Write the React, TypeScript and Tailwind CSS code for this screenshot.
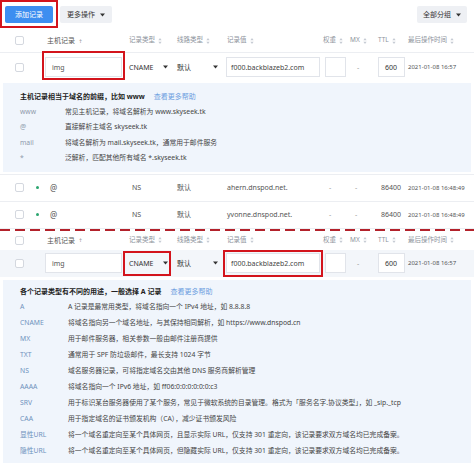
import React from 'react';

const cols = 'grid grid-cols-[42px_84px_48px_50px_98px_26px_28px_30px_1fr] items-center';

const SortIcon = () => (
    <svg width="4" height="6" viewBox="0 0 4 6" className="ml-[3px] inline-block">
        <path d="M2 0 L3.6 2.2 H0.4 Z" fill="#c5cad3" />
        <path d="M2 6 L3.6 3.8 H0.4 Z" fill="#c5cad3" />
    </svg>
);

const Caret = () => (
    <svg width="5" height="4" viewBox="0 0 5 4">
        <path d="M0 0.5 H5 L2.5 3.5 Z" fill="#333" />
    </svg>
);

const Checkbox = () => (
    <div className="ml-[15px] w-[9px] h-[9px] rounded-[2px] border border-[#d4d8df] bg-white" />
);

const RedBox: React.FC<{ className: string }> = ({ className }) => (
    <div className={`absolute border-2 border-[#d3141c] pointer-events-none ${className}`} />
);

const HeaderRow: React.FC<{ className?: string }> = ({ className = '' }) => (
    <div className={`${cols} text-[6.5px] text-[#8d939c] ${className}`}>
        <div><Checkbox /></div>
        <div className="pl-[5px] text-[7px] text-[#555] flex items-center">主机记录<span className="ml-[4px] text-[6px] text-[#999]">†</span></div>
        <div className="pl-[3px] flex items-center">记录类型<SortIcon /></div>
        <div className="pl-[3px] flex items-center">线路类型<SortIcon /></div>
        <div className="pl-[3px] flex items-center">记录值<SortIcon /></div>
        <div className="pl-[1px] flex items-center">权重<SortIcon /></div>
        <div className="pl-[2px] flex items-center">MX<SortIcon /></div>
        <div className="pl-[2px] flex items-center">TTL<SortIcon /></div>
        <div className="pl-[2px] flex items-center">最后操作时间<SortIcon /></div>
    </div>
);

const EditRow: React.FC<{ className?: string }> = ({ className = '' }) => (
    <div className={`${cols} text-[7px] text-[#333] ${className}`}>
        <div><Checkbox /></div>
        <div className="pl-[3px]">
            <div className="w-[77px] h-[20px] border border-[#e1e4ea] bg-white flex items-center pl-[6px] text-[#555]">img</div>
        </div>
        <div className="pl-[3px] pr-[6px] flex items-center justify-between">CNAME<Caret /></div>
        <div className="pl-[3px] pr-[6px] flex items-center justify-between">默认<Caret /></div>
        <div className="pl-[2px]">
            <div className="w-[94px] h-[20px] border border-[#e1e4ea] bg-white flex items-center pl-[4px] text-[#444]">f000.backblazeb2.com</div>
        </div>
        <div className="pl-[3px]">
            <div className="w-[21px] h-[20px] border border-[#e1e4ea] bg-white" />
        </div>
        <div className="pl-[9px] text-[#999]">-</div>
        <div className="pl-[2px]">
            <div className="w-[27px] h-[20px] border border-[#e1e4ea] bg-white flex items-center pl-[6px]">600</div>
        </div>
        <div className="pl-[2px] text-[6px] text-[#555]">2021-01-08 16:57</div>
    </div>
);

const NsRow: React.FC<{ value: string }> = ({ value }) => (
    <div className={`${cols} h-[27px] border-b border-[#eceef2] text-[7px] text-[#555]`}>
        <div className="flex items-center">
            <Checkbox />
            <span className="ml-[12px] w-[3px] h-[3px] rounded-full bg-[#2ba56f]" />
        </div>
        <div className="pl-[8px] text-[8px]">@</div>
        <div className="pl-[6px]">NS</div>
        <div className="pl-[3px]">默认</div>
        <div className="pl-[3px]">{value}</div>
        <div className="pl-[7px] text-[#999]">-</div>
        <div className="pl-[7px] text-[#999]">-</div>
        <div className="pl-[5px]">86400</div>
        <div className="pl-[2px] text-[6px]">2021-01-08 16:48:49</div>
    </div>
);

const HelpBox: React.FC<{ title: string; linkGap: string; labelW: string; labelColor: string; rowH: string; rows: [string, string][]; className?: string }> = ({ title, linkGap, labelW, labelColor, rowH, rows, className = '' }) => (
    <div className={`mx-[3px] bg-[#f0f5fc] pl-[17px] ${className}`}>
        <div className={`flex items-center ${rowH} text-[7px]`}>
            <span className="font-bold text-[#222]">{title}</span>
            <span className={`${linkGap} text-[#6d9ee0]`}>查看更多帮助</span>
        </div>
        {rows.map(([k, v]) => (
            <div key={k} className={`flex items-center ${rowH} text-[6.8px] whitespace-nowrap`}>
                <span className={`${labelW} shrink-0 ${labelColor}`}>{k}</span>
                <span className="text-[#444]">{v}</span>
            </div>
        ))}
    </div>
);

export default function App() {
    return (
        <div className="relative w-[474px] h-[464px] overflow-hidden bg-white font-['Noto_Sans','Noto_Sans_CJK_SC',sans-serif] leading-none">
            {/* toolbar */}
            <div className="flex items-center justify-between h-[29px] pl-[5px] pr-[7px]">
                <div className="flex items-center gap-[7px]">
                    <button className="w-[48px] h-[17px] rounded-[2px] bg-[#3d8ef0] text-white text-[7px]">添加记录</button>
                    <button className="w-[52px] h-[17px] rounded-[2px] bg-[#eef0f4] text-[#333] text-[7px] flex items-center justify-center gap-[5px]">更多操作<Caret /></button>
                </div>
                <button className="w-[50px] h-[17px] rounded-[2px] bg-[#eef0f4] text-[#333] text-[7px] flex items-center justify-center gap-[5px]">全部分组<Caret /></button>
            </div>

            <HeaderRow className="h-[24px] border-b border-[#eceef2]" />
            <EditRow className="h-[28px]" />

            <HelpBox
                className="mt-[2px] pt-[6px] pb-[5px]"
                title="主机记录相当于域名的前缀，比如 www"
                linkGap="ml-[9px]"
                labelW="w-[45px]"
                labelColor="text-[#8e99ab]"
                rowH="h-[15.5px]"
                rows={[
                    ['www', '常见主机记录，将域名解析为 www.skyseek.tk'],
                    ['@', '直接解析主域名 skyseek.tk'],
                    ['mail', '将域名解析为 mail.skyseek.tk，通常用于邮件服务'],
                    ['*', '泛解析，匹配其他所有域名 *.skyseek.tk'],
                ]}
            />

            <div className="h-[3px] border-b border-[#eceef2]" />
            <NsRow value="ahern.dnspod.net." />
            <NsRow value="yvonne.dnspod.net." />

            {/* dashed divider */}
            <div className="h-[2px] bg-[repeating-linear-gradient(90deg,#b3222b_0_10px,transparent_10px_15px)]" />

            <HeaderRow className="h-[19px]" />
            <EditRow className="h-[27px] bg-[#f3f6fa]" />

            <HelpBox
                className="mt-[3px] pt-[4px] pb-[3px]"
                title="各个记录类型有不同的用途，一般选择 A 记录"
                linkGap="ml-[9px]"
                labelW="w-[48px]"
                labelColor="text-[#6f92bd]"
                rowH="h-[16px]"
                rows={[
                    ['A', 'A 记录是最常用类型，将域名指向一个 IPv4 地址，如 8.8.8.8'],
                    ['CNAME', '将域名指向另一个域名地址，与其保持相同解析，如 https://www.dnspod.cn'],
                    ['MX', '用于邮件服务器，相关参数一般由邮件注册商提供'],
                    ['TXT', '通常用于 SPF 防垃圾邮件，最长支持 1024 字节'],
                    ['NS', '域名服务器记录，可将指定域名交由其他 DNS 服务商解析管理'],
                    ['AAAA', '将域名指向一个 IPv6 地址，如 ff06:0:0:0:0:0:0:c3'],
                    ['SRV', '用于标识某台服务器使用了某个服务，常见于微软系统的目录管理。格式为「服务名字.协议类型」，如 _sip._tcp'],
                    ['CAA', '用于指定域名的证书颁发机构（CA），减少证书颁发风险'],
                    ['显性URL', '将一个域名重定向至某个具体网页，且显示实际 URL，仅支持 301 重定向，该记录要求双方域名均已完成备案。'],
                    ['隐性URL', '将一个域名重定向至某个具体网页，但隐藏实际 URL，仅支持 301 重定向，该记录要求双方域名均已完成备案。'],
                ]}
            />

            {/* red annotation boxes */}
            <RedBox className="left-0 top-0 w-[58px] h-[28px]" />
            <RedBox className="left-[42px] top-[51px] w-[83px] h-[29px]" />
            <RedBox className="left-[123px] top-[251px] w-[48px] h-[25px]" />
            <RedBox className="left-[223px] top-[250px] w-[100px] h-[27px]" />
        </div>
    );
}
